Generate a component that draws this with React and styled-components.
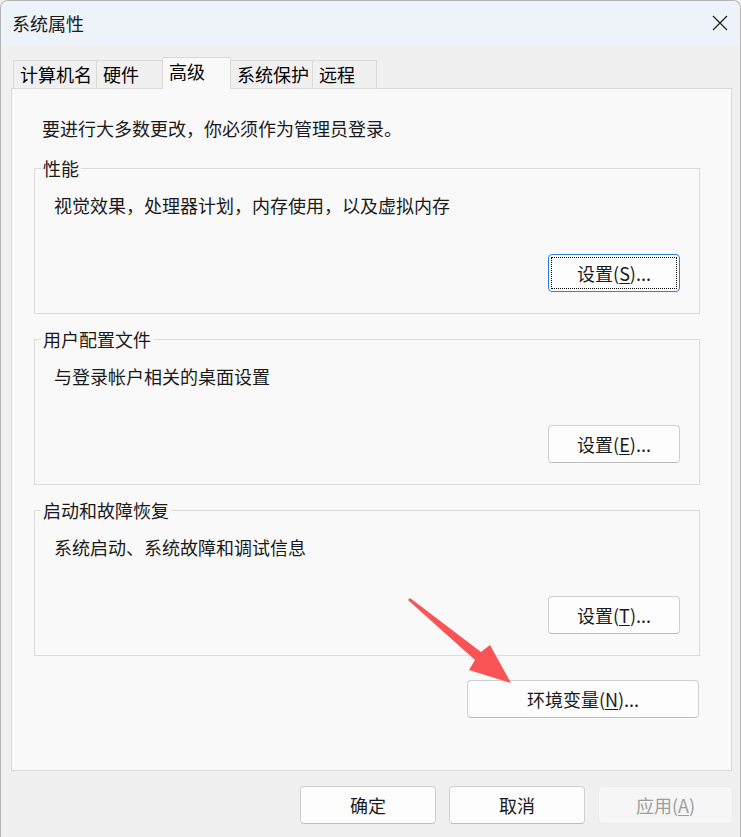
import React from 'react';
import styled, { createGlobalStyle } from 'styled-components';

const GlobalStyle = createGlobalStyle`
  html, body {
    margin: 0;
    padding: 0;
    background: #f0f0f0;
  }
  * {
    box-sizing: border-box;
  }
`;

const tabs = [
    { label: '计算机名', width: 84 },
    { label: '硬件', width: 67 },
    { label: '高级', width: 69, active: true },
    { label: '系统保护', width: 83 },
    { label: '远程', width: 65 },
];

const groups = [
    { title: '性能', text: '视觉效果，处理器计划，内存使用，以及虚拟内存', key: 'S', focused: true },
    { title: '用户配置文件', text: '与登录帐户相关的桌面设置', key: 'E' },
    { title: '启动和故障恢复', text: '系统启动、系统故障和调试信息', key: 'T' },
];

const CloseIcon = () => (
    <svg width="16" height="16" viewBox="0 0 16 16">
        <path d="M1 1 L15 15 M15 1 L1 15" stroke="#1c1c1c" strokeWidth="1.2" fill="none" />
    </svg>
);

const Arrow = () => (
    <ArrowLayer width="120" height="100" viewBox="0 0 120 100">
        <polygon
            points="10,8 81,62 90,55 111,93 69,80 75,70 8,10"
            fill="#f95455"
        />
    </ArrowLayer>
);

const Mnemonic = ({ label, letter }) => (
    <>
        {label}(<u>{letter}</u>)...
    </>
);

const App = () => {
    return (
        <Window>
            <GlobalStyle />
            <TitleBar>
                <Title>系统属性</Title>
                <CloseIcon />
            </TitleBar>
            <Body>
                <TabStrip>
                    {tabs.map((tab) => (
                        <Tab key={tab.label} $width={tab.width} $active={tab.active}>
                            {tab.label}
                        </Tab>
                    ))}
                </TabStrip>
                <Panel>
                    <Intro>要进行大多数更改，你必须作为管理员登录。</Intro>
                    {groups.map((group) => (
                        <Group key={group.title}>
                            <Legend>{group.title}</Legend>
                            <GroupBody>
                                <GroupText>{group.text}</GroupText>
                                <ButtonRow>
                                    <Button $width={132} $focused={group.focused}>
                                        <Mnemonic label="设置" letter={group.key} />
                                    </Button>
                                </ButtonRow>
                            </GroupBody>
                        </Group>
                    ))}
                    <EnvRow>
                        <Button $width={232}>
                            <Mnemonic label="环境变量" letter="N" />
                        </Button>
                    </EnvRow>
                </Panel>
                <Footer>
                    <Button $width={136}>确定</Button>
                    <Button $width={136}>取消</Button>
                    <Button $width={135} disabled>
                        应用(<u>A</u>)
                    </Button>
                </Footer>
            </Body>
            <Arrow />
        </Window>
    );
};

const Window = styled.div`
  position: relative;
  width: 741px;
  height: 837px;
  display: flex;
  flex-direction: column;
  background: #f0f0f0;
  border: 1px solid #b4b4b4;
  border-bottom: none;
  border-radius: 8px 8px 0 0;
  overflow: hidden;
  font-family: "Noto Sans CJK SC", "Noto Sans", sans-serif;
  color: #1a1a1a;
`;

const TitleBar = styled.div`
  height: 44px;
  display: flex;
  align-items: center;
  justify-content: space-between;
  padding: 0 12px 0 11px;
  background: #eef3f9;
  flex-shrink: 0;
`;

const Title = styled.div`
  font-size: 18px;
  line-height: 24px;
`;

const Body = styled.div`
  display: flex;
  flex-direction: column;
  padding: 13px 0 0 10px;
`;

const TabStrip = styled.div`
  display: flex;
  align-items: flex-end;
  padding-left: 3px;
  height: 31px;
  position: relative;
  z-index: 1;
  margin-bottom: -1px;
`;

const Tab = styled.div`
  width: ${(p) => p.$width}px;
  height: ${(p) => (p.$active ? 32 : 29)}px;
  padding: 1px 0 0 6px;
  background: ${(p) => (p.$active ? '#f9f9f9' : '#f0f0f0')};
  border: 1px solid #d9d9d9;
  border-bottom-color: ${(p) => (p.$active ? '#f9f9f9' : '#d9d9d9')};
  border-radius: ${(p) => (p.$active ? '2px 2px 0 0' : '0')};
  margin-left: -1px;
  font-size: 18px;
  line-height: 24px;
  color: #000;
  white-space: nowrap;
`;

const Panel = styled.div`
  width: 721px;
  height: 683px;
  background: #f9f9f9;
  border: 1px solid #dadada;
  padding: 27px 31px 0 22px;
  display: flex;
  flex-direction: column;
`;

const Intro = styled.div`
  margin-left: 8px;
  font-size: 18px;
  line-height: 24px;
  margin-bottom: 17px;
`;

const Group = styled.fieldset`
  margin: 0 0 14px 0;
  padding: 0;
  border: 1px solid #dcdcdc;
  min-width: 0;
`;

const Legend = styled.legend`
  margin-left: 6px;
  padding: 0 2px;
  font-size: 18px;
  line-height: 22px;
`;

const GroupBody = styled.div`
  padding: 14px 19px 21px 19px;
  display: flex;
  flex-direction: column;
`;

const GroupText = styled.div`
  font-size: 18px;
  line-height: 24px;
`;

const ButtonRow = styled.div`
  display: flex;
  justify-content: flex-end;
  margin-top: 37px;
`;

const EnvRow = styled.div`
  display: flex;
  justify-content: flex-end;
  margin-top: 10px;
  padding-right: 1px;
`;

const Button = styled.button`
  position: relative;
  width: ${(p) => p.$width}px;
  height: 38px;
  padding: 0;
  background: ${(p) => (p.disabled ? '#f6f6f6' : '#fdfdfd')};
  border: 1px solid ${(p) => (p.$focused ? '#2a7fd6' : p.disabled ? '#ececec' : '#d0d0d0')};
  border-bottom-color: ${(p) => (p.$focused ? '#2a7fd6' : p.disabled ? '#ececec' : '#bdbdbd')};
  border-radius: 4px;
  font-family: inherit;
  font-size: 18px;
  line-height: 24px;
  color: ${(p) => (p.disabled ? '#9d9d9d' : '#1a1a1a')};

  u {
    text-underline-offset: 2px;
  }

  &::after {
    content: '';
    display: ${(p) => (p.$focused ? 'block' : 'none')};
    position: absolute;
    inset: 2px;
    border: 1px dotted #000;
  }
`;

const Footer = styled.div`
  display: flex;
  justify-content: flex-end;
  gap: 13px;
  padding-right: 7px;
  margin-top: 15px;
`;

const ArrowLayer = styled.svg`
  position: absolute;
  left: 399px;
  top: 589px;
  pointer-events: none;
`;

export default App;
